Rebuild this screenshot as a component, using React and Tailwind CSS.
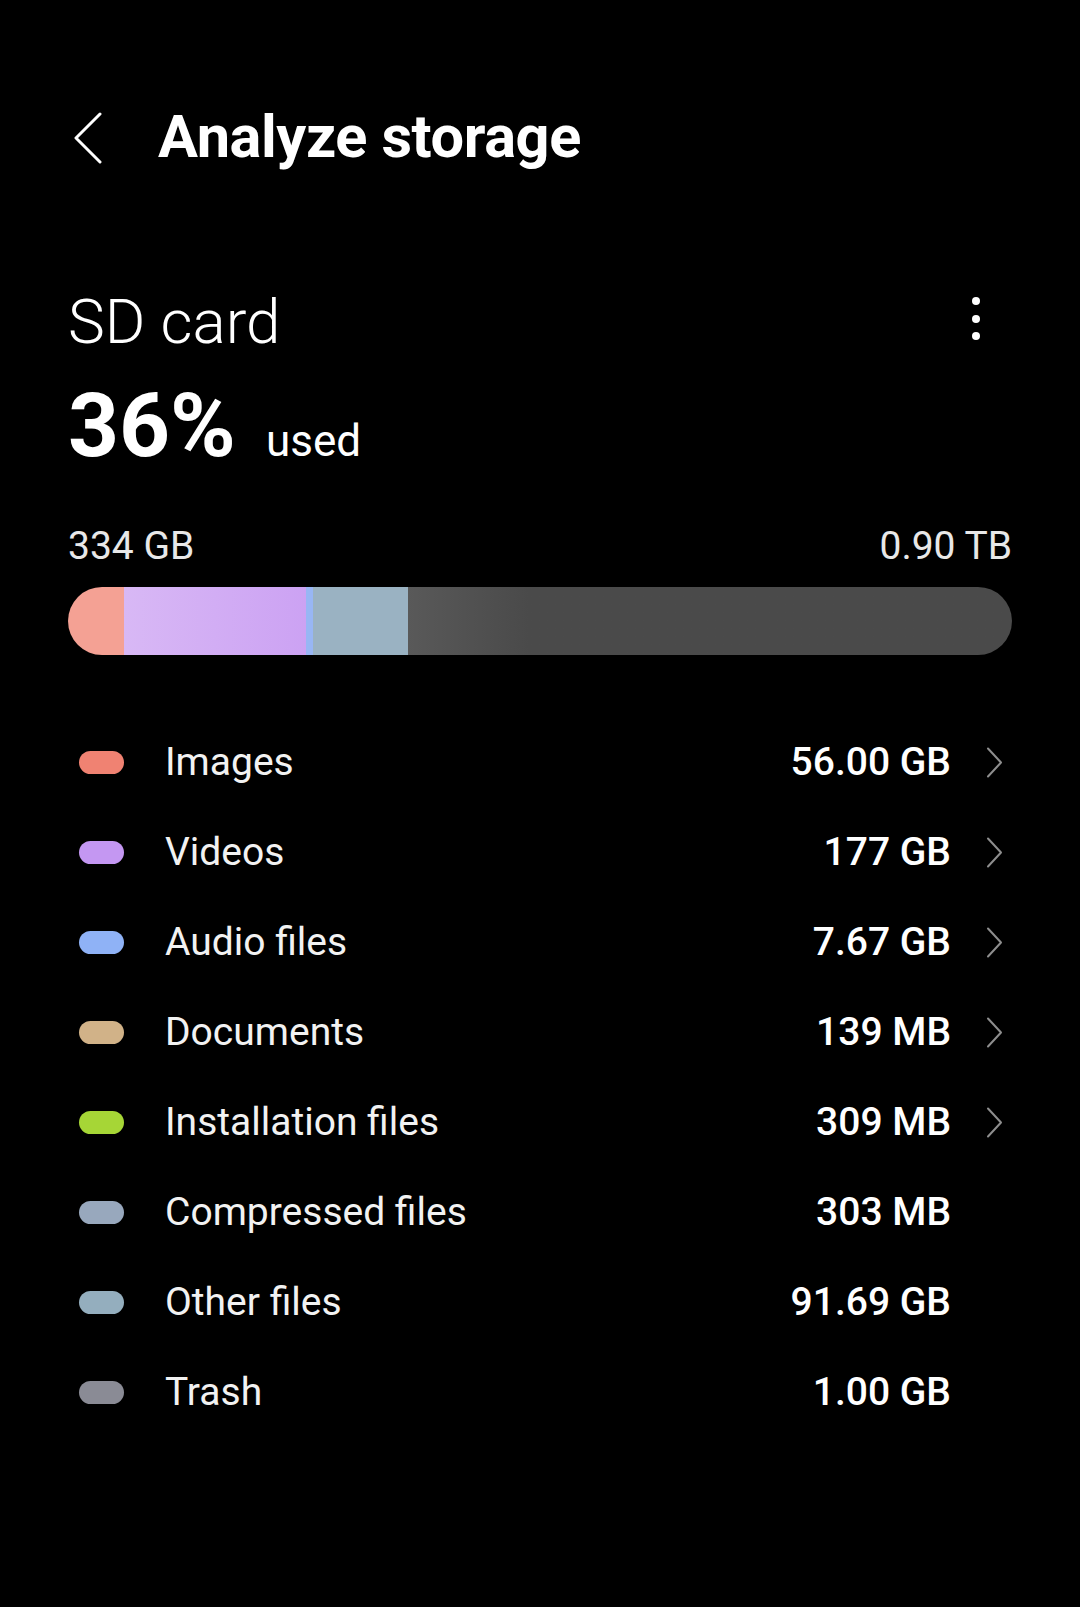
import { useState } from "react";

const rows = [
    { label: "Images", value: "56.00 GB", color: "bg-[#f08272]", more: true },
    { label: "Videos", value: "177 GB", color: "bg-[#c497f2]", more: true },
    { label: "Audio files", value: "7.67 GB", color: "bg-[#8fb2f6]", more: true },
    { label: "Documents", value: "139 MB", color: "bg-[#d1b288]", more: true },
    { label: "Installation files", value: "309 MB", color: "bg-[#a6d636]", more: true },
    { label: "Compressed files", value: "303 MB", color: "bg-[#98a8bd]", more: false },
    { label: "Other files", value: "91.69 GB", color: "bg-[#94aebe]", more: false },
    { label: "Trash", value: "1.00 GB", color: "bg-[#8a8b95]", more: false },
];

function BackIcon() {
    return (
        <svg width="30" height="52" viewBox="0 0 30 52" fill="none">
            <path d="M27 2 L3 26 L27 50" stroke="white" strokeWidth="3" strokeLinecap="round" strokeLinejoin="round" />
        </svg>
    );
}

function Chevron() {
    return (
        <svg width="17" height="31" viewBox="0 0 17 31" fill="none">
            <path d="M2 1.5 L15 15.5 L2 29.5" stroke="#8e8e8e" strokeWidth="2" strokeLinecap="round" strokeLinejoin="round" />
        </svg>
    );
}

function StorageRow({ label, value, color, more }) {
    return (
        <div className="h-[90px] flex items-center pl-[79px] pr-[77px]">
            <div className={`w-[45px] h-[23px] rounded-full ${color}`} />
            <p className="ml-[41px] flex-1 text-[39px] leading-none text-[#f2f2f2]">{label}</p>
            <p className="text-[39px] leading-none font-medium text-white">{value}</p>
            <div className="w-[52px] flex justify-end">
                {more && <Chevron />}
            </div>
        </div>
    );
}

export default function App() {
    const [menuOpen, setMenuOpen] = useState(false);

    return (
        <div className="w-[1080px] h-[1607px] bg-black text-white font-['Roboto',sans-serif] overflow-hidden">
            <div className="flex items-center h-[60px] mt-[108px]">
                <button className="ml-[73px]" aria-label="Back">
                    <BackIcon />
                </button>
                <h1 className="ml-[55px] text-[59.5px] leading-none font-bold tracking-[-0.4px]">Analyze storage</h1>
            </div>

            <div className="px-[68px] mt-[123px]">
                <div className="flex justify-between items-start">
                    <h2 className="text-[62px] leading-none font-light">SD card</h2>
                    <button className="mt-[6px] mr-[32px] flex flex-col gap-[9.5px]" onClick={() => setMenuOpen(v => !v)} aria-label="More options">
                        <span className="w-[8px] h-[8px] rounded-full bg-white" />
                        <span className="w-[8px] h-[8px] rounded-full bg-white" />
                        <span className="w-[8px] h-[8px] rounded-full bg-white" />
                    </button>
                </div>

                <div className="mt-[28px] flex items-baseline">
                    <span className="text-[89px] leading-none font-bold">36%</span>
                    <span className="ml-[30px] text-[44px] leading-none">used</span>
                </div>

                <div className="mt-[57px] flex justify-between text-[39px] leading-none text-[#e8e8e8]">
                    <span>334 GB</span>
                    <span>0.90 TB</span>
                </div>

                <div className="mt-[21px] h-[68px] rounded-full overflow-hidden flex">
                    <div className="w-[56px] bg-[#f4a194]" />
                    <div className="w-[182px] bg-gradient-to-r from-[#d8b8f5] to-[#cca2f3]" />
                    <div className="w-[7px] bg-[#98b6f4]" />
                    <div className="w-[95px] bg-[#9ab2c2]" />
                    <div className="flex-1 bg-gradient-to-r from-[#595959] to-[#4a4a4a] to-[20%]" />
                </div>
            </div>

            <div className="mt-[62px]">
                {rows.map(r => <StorageRow key={r.label} {...r} />)}
            </div>
        </div>
    );
}
